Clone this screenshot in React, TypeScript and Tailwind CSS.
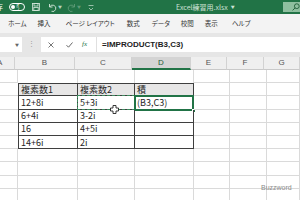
import React from "react";

const JP = "font-['Noto_Sans_CJK_JP',sans-serif]";
const COLS = ["A", "B", "C", "D", "E", "F", "G"];
const WIDTHS = ["w-[18px]", "w-[60px]", "w-[57px]", "w-[59px]", "w-[36px]", "w-[37px]", "flex-1"];

const DATA: Record<string, string> = {
  "2-1": "複素数1",
  "2-2": "複素数2",
  "2-3": "積",
  "3-1": "12+8i",
  "3-2": "5+3i",
  "3-3": "(B3,C3)",
  "4-1": "6+4i",
  "4-2": "3-2i",
  "5-1": "16",
  "5-2": "4+5i",
  "6-1": "14+6i",
  "6-2": "2i",
};

const inTable = (r: number, c: number) => r >= 2 && r <= 6 && c >= 1 && c <= 3;

function cellClass(r: number, c: number) {
  const cls: string[] = [];
  // right border
  if (inTable(r, c)) cls.push("border-r border-r-[#3f3f3f]");
  else if (c === 0 && r >= 2 && r <= 6) cls.push("border-r-0");
  else cls.push("border-r border-r-[#dadada]");
  // left border for B column of the table
  if (c === 1 && inTable(r, c)) cls.push("border-l border-l-[#3f3f3f]");
  // bottom border
  if (inTable(r, c)) cls.push("border-b border-b-[#3f3f3f]");
  else if (r === 1 && c >= 1 && c <= 3) cls.push("border-b-0");
  else cls.push("border-b border-b-[#dadada]");
  // top border + fill for the table header row
  if (r === 2 && c >= 1 && c <= 3) cls.push("border-t border-t-[#3f3f3f] bg-[#e7e6e6]");
  return cls.join(" ");
}

function Sheet() {
  const rows = [1, 2, 3, 4, 5, 6, 7, 8, 9, 10];
  return (
    <div className="flex flex-col">
      {/* column headers */}
      <div className="flex h-[13px] bg-[#efefef]">
        {COLS.map((c, i) => (
          <div
            key={c}
            className={`${WIDTHS[i]} flex items-center justify-center text-[8px] leading-none font-['Liberation_Sans',sans-serif] border-r border-[#d2d2d2] ${
              c === "D"
                ? "bg-[#d4d4d4] border-b-2 border-b-[#217346] text-[#1f5c38]"
                : "border-b border-b-[#c9c9c9] text-[#555]"
            } ${c === "A" ? "justify-start -ml-[3px]" : ""}`}
          >
            {c}
          </div>
        ))}
      </div>
      {rows.map((r) => (
        <div key={r} className="flex h-[13.2px]">
          {COLS.map((_, c) => {
            const txt = DATA[`${r}-${c}`];
            return (
              <div
                key={c}
                className={`${WIDTHS[c]} relative flex items-center px-[2px] text-[9px] leading-none text-[#262626] ${JP} whitespace-nowrap ${cellClass(r, c)}`}
              >
                {txt}
                {r === 3 && c === 2 && (
                  <>
                    <div className="absolute -inset-[1px] border-[1.5px] border-dashed border-[#3d8a5e]" />
                    <svg className="absolute left-[32px] top-[9px]" width="9" height="9" viewBox="0 0 9 9">
                      <path d="M3 0.5h3v2.5h2.5v3H6v2.5H3V6H0.5V3H3z" fill="#fff" stroke="#222" strokeWidth="0.9" />
                    </svg>
                  </>
                )}
                {r === 3 && c === 3 && (
                  <>
                    <div className="absolute -left-[1px] -top-[1px] -right-[1px] -bottom-[2px] border-2 border-[#217346]" />
                    <div className="absolute -right-[3px] -bottom-[4px] w-[4px] h-[4px] bg-[#217346] border border-white" />
                  </>
                )}
              </div>
            );
          })}
        </div>
      ))}
    </div>
  );
}

export default function App() {
  return (
    <div className={`relative w-[300px] h-[200px] overflow-hidden bg-white ${JP}`}>
      {/* title bar */}
      <div className="h-[14px] bg-[#217346] flex items-center text-white">
        <span className="-ml-[5px] text-[8px] leading-none">存</span>
        <div className="ml-[6px] flex items-center h-[8px] w-[16px] rounded-full border border-white px-[1px]">
          <div className="w-[4px] h-[4px] rounded-full bg-white" />
          <span className="ml-[1px] text-[4px] leading-none">オフ</span>
        </div>
        <svg className="ml-[7px]" width="8" height="8" viewBox="0 0 8 8" fill="none" stroke="#d6e8dc" strokeWidth="0.8">
          <rect x="0.5" y="0.5" width="7" height="7" />
          <rect x="2" y="0.5" width="4" height="2.5" />
          <rect x="1.8" y="4.5" width="4.4" height="3" />
        </svg>
        <svg className="ml-[8px]" width="9" height="9" viewBox="0 0 9 9" fill="none" stroke="#d6e8dc" strokeWidth="0.9">
          <path d="M1.5 1v3h3" />
          <path d="M1.7 4A3.2 3.2 0 1 1 3.5 8.3" />
        </svg>
        <span className="ml-[1px] text-[4px] text-[#b7d3c1]">▼</span>
        <svg className="ml-[5px]" width="9" height="9" viewBox="0 0 9 9" fill="none" stroke="#5f9b77" strokeWidth="0.9">
          <path d="M7.5 1v3h-3" />
          <path d="M7.3 4A3.2 3.2 0 1 0 5.5 8.3" />
        </svg>
        <span className="ml-[1px] text-[4px] text-[#5f9b77]">▼</span>
        <svg className="ml-[7px]" width="6" height="7" viewBox="0 0 6 7" fill="none" stroke="#b7d3c1" strokeWidth="0.8">
          <path d="M0.5 1.5h5" />
          <path d="M1 4l2 2 2-2" />
        </svg>
        <span className="ml-[82px] text-[7px] leading-none text-[#cfe2d6]">Excel練習用.xlsx</span>
        <span className="ml-[3px] text-[4px] text-[#cfe2d6]">▼</span>
        <div className="ml-auto h-[10px] w-[17px] bg-[#8ebf9f] flex items-center pl-[9px]">
          <svg width="8" height="8" viewBox="0 0 8 8" fill="none" stroke="#1f5c38" strokeWidth="0.9">
            <circle cx="4.8" cy="3.2" r="2.4" />
            <path d="M3.1 4.9L0.6 7.4" />
          </svg>
        </div>
      </div>

      {/* ribbon tabs */}
      <div className="h-[19px] bg-[#f3f3f3] flex items-center text-[6.5px] leading-none text-[#333] [font-feature-settings:'palt']">
        <span className="ml-[8px]">ホーム</span>
        <span className="ml-[11px]">挿入</span>
        <span className="ml-[15px]">ページ レイアウト</span>
        <span className="ml-[12px]">数式</span>
        <span className="ml-[12px]">データ</span>
        <span className="ml-[11px]">校閲</span>
        <span className="ml-[11px]">表示</span>
        <span className="ml-[14px]">ヘルプ</span>
      </div>

      {/* formula bar */}
      <div className="h-[24px] bg-[#e6e6e6] flex items-start pt-[4px]">
        <div className="h-[15px] w-[22px] bg-white flex items-center justify-end pr-[3px]">
          <span className="text-[4px] text-[#666]">▼</span>
        </div>
        <span className="ml-[6px] mt-[3px] text-[7px] leading-none text-[#999]">⋮</span>
        <div className="ml-[6px] h-[15px] w-[55px] bg-white flex items-center">
          <svg className="ml-[7px]" width="6" height="6" viewBox="0 0 6 6" stroke="#555" strokeWidth="0.8">
            <path d="M0.5 0.5l5 5M5.5 0.5l-5 5" />
          </svg>
          <svg className="ml-[12px]" width="7" height="6" viewBox="0 0 7 6" fill="none" stroke="#555" strokeWidth="0.9">
            <path d="M0.5 3.2l2 2 4-4.7" />
          </svg>
          <span className="ml-[9px] text-[7px] italic leading-none text-[#217346] font-['Liberation_Serif',serif]">fx</span>
        </div>
        <div className="h-[15px] flex-1 bg-white border-l border-[#e0e0e0] flex items-center pl-[5px]">
          <span className="text-[8px] leading-none font-semibold text-[#222] font-['Liberation_Sans',sans-serif]">=IMPRODUCT(B3,C3)</span>
        </div>
      </div>

      <Sheet />

      <span className="absolute left-[261px] top-[183px] text-[7px] text-[#8a8a8a] font-['Liberation_Sans',sans-serif]">Buzzword</span>
    </div>
  );
}
